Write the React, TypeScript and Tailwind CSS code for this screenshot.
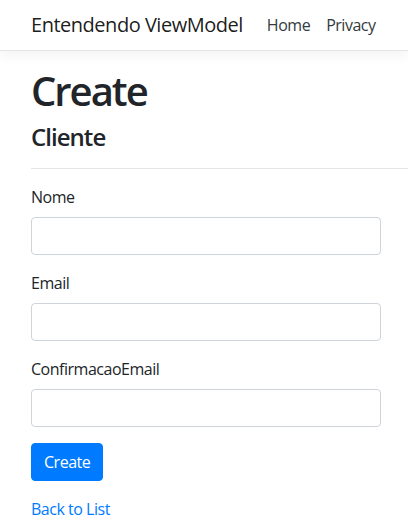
const fields = ["Nome", "Email", "ConfirmacaoEmail"];

export default function App() {
  return (
    <div className="min-h-screen bg-white text-[#212529] font-['Segoe_UI','Open_Sans',sans-serif] text-base leading-6 tracking-[-0.03em]">
      {/* NAVBAR */}
      <header className="mb-4">
        <nav className="h-[51px] flex items-center pl-[31px] bg-white border-b border-[#e5e5e5] shadow-[0_4px_12px_rgba(0,0,0,0.05)]">
          <a className="text-[20px] leading-[30px] text-[rgba(0,0,0,0.9)] mr-4 whitespace-nowrap">
            Entendendo ViewModel
          </a>
          <a className="px-2 text-[#343a40] whitespace-nowrap">Home</a>
          <a className="px-2 text-[#343a40] whitespace-nowrap">Privacy</a>
        </nav>
      </header>

      {/* CONTENT */}
      <main className="pl-[31px]">
        <h1 className="mt-[2px] text-[40px] leading-[48px] font-semibold tracking-[-0.05em] mb-2">Create</h1>
        <h4 className="text-[24px] leading-[28.8px] font-semibold tracking-[-0.04em] mb-[6px]">Cliente</h4>
        <hr className="my-4 border-t border-[rgba(0,0,0,0.1)]" />

        <form className="w-[350px]">
          {fields.map((f) => (
            <div key={f} className="mb-4">
              <label className="block mb-2">{f}</label>
              <input
                type="text"
                className="block w-full h-[38px] px-3 rounded border border-[#ced4da] bg-white"
              />
            </div>
          ))}
          <div className="mb-4">
            <button
              type="button"
              className="h-[38px] px-3 rounded bg-[#007bff] text-white border border-[#007bff]"
            >
              Create
            </button>
          </div>
        </form>

        <div>
          <a className="text-[#007bff]">Back to List</a>
        </div>
      </main>
    </div>
  );
}
